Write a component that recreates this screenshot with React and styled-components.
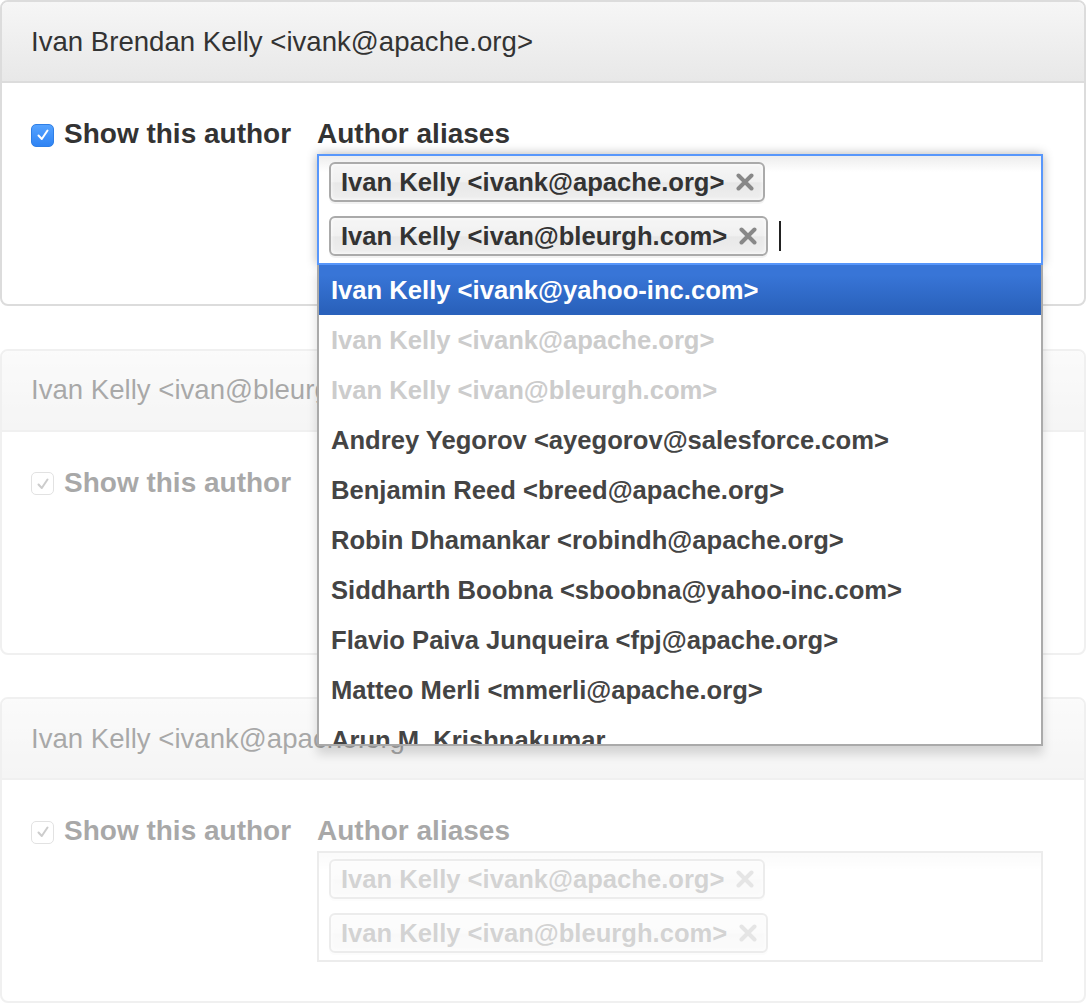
import React from "react";
import styled, { createGlobalStyle } from "styled-components";

const GlobalStyle = createGlobalStyle`
  html, body { margin: 0; padding: 0; background: #fff; }
  body {
    font-family: "Liberation Sans", Arial, Helvetica, sans-serif;
    color: #333;
  }
  * { box-sizing: border-box; }
`;

/* 样式 */
const Page = styled.div`
  width: 1086px;
  display: flex;
  flex-direction: column;
  gap: 42.5px;
`;

const Panel = styled.section`
  position: relative;
  z-index: ${p => (p.$open ? 2 : 1)};
  border: 2px solid #dcdcdc;
  border-radius: 8px;
  background: #fff;
  opacity: ${p => (p.$faded ? 0.42 : 1)};
`;

const Header = styled.header`
  height: 81px;
  display: flex;
  align-items: center;
  padding: 0 29px;
  background: linear-gradient(#f6f6f6, #e8e8e8);
  border-bottom: 2px solid #dcdcdc;
  border-radius: 6px 6px 0 0;
  font-size: 27.6px;
  white-space: nowrap;
  overflow: hidden;
`;

const Body = styled.div`
  display: grid;
  grid-template-columns: 286px 1fr;
  padding: 31px 41px 39px 29px;
`;

const CheckLabel = styled.label`
  display: flex;
  align-items: center;
  gap: 10px;
  height: 40px;
  font-size: 28px;
  font-weight: bold;
`;

const Box = styled.span`
  width: 23px;
  height: 23px;
  flex: none;
  display: flex;
  align-items: center;
  justify-content: center;
  border-radius: 5px;
  margin-top: 2px;
  background: ${p => (p.$disabled ? "#fff" : "linear-gradient(#55a3ff, #2f83f4)")};
  border: ${p => (p.$disabled ? "1px solid #bbb" : "1px solid #2f7fe6")};
`;

const Aliases = styled.div`
  display: flex;
  flex-direction: column;
`;

const FieldLabel = styled.div`
  height: 40px;
  line-height: 40px;
  font-size: 28px;
  font-weight: bold;
`;

const Chosen = styled.div`
  position: relative;
  opacity: ${p => (p.$disabled ? 0.5 : 1)};
`;

const Choices = styled.div`
  display: flex;
  flex-wrap: wrap;
  align-items: center;
  row-gap: 14px;
  column-gap: 11px;
  padding: 6px 8px 7px 10px;
  border: 2px solid ${p => (p.$active ? "#5897fb" : "#aaa")};
  background: linear-gradient(#eee 1%, #fff 15%);
  box-shadow: ${p => (p.$active ? "0 0 10px rgba(0,0,0,.3)" : "none")};
`;

const Chip = styled.span`
  height: 40px;
  display: flex;
  align-items: center;
  gap: 11px;
  padding: 0 8px 0 10px;
  border: 2px solid #aaa;
  border-radius: 6px;
  background: linear-gradient(#f4f4f4 20%, #f0f0f0 50%, #e8e8e8 52%, #eee);
  box-shadow: inset 0 0 4px #fff, 0 2px 0 rgba(0,0,0,.05);
  font-size: 25.6px;
  font-weight: bold;
  color: #333;
  white-space: nowrap;
`;

const Caret = styled.span`
  width: 2px;
  height: 30px;
  background: #222;
`;

const Drop = styled.ul`
  position: absolute;
  top: 100%;
  left: 0;
  right: 0;
  margin: 0;
  padding: 0;
  list-style: none;
  height: 481px;
  overflow: hidden;
  background: #fff;
  border: 2px solid #aaa;
  border-top: 0;
  box-shadow: 0 8px 10px rgba(0,0,0,.15);
`;

const Item = styled.li`
  height: 50px;
  line-height: 50px;
  padding: 0 12px;
  font-size: 25.6px;
  font-weight: bold;
  white-space: nowrap;
  color: ${p => (p.$hl ? "#fff" : p.$off ? "#ccc" : "#444")};
  background: ${p => (p.$hl ? "linear-gradient(#3875d7 20%, #2a62bc 90%)" : "transparent")};
`;

const CloseX = () => (
  <svg width="20" height="18" viewBox="0 0 20 18">
    <path d="M3.5 2.5 L16.5 15.5 M16.5 2.5 L3.5 15.5" stroke="#888" strokeWidth="4" strokeLinecap="round" fill="none" />
  </svg>
);

const Tick = ({ disabled }) => (
  <svg width="16" height="16" viewBox="0 0 16 16">
    <path d="M3.5 8.5 L6.8 12 L12.5 3.5" stroke={disabled ? "#888" : "#fff"} strokeWidth="2" strokeLinecap="round" strokeLinejoin="round" fill="none" />
  </svg>
);

const results = [
  { t: "Ivan Kelly <ivank@yahoo-inc.com>", hl: true },
  { t: "Ivan Kelly <ivank@apache.org>", off: true },
  { t: "Ivan Kelly <ivan@bleurgh.com>", off: true },
  { t: "Andrey Yegorov <ayegorov@salesforce.com>" },
  { t: "Benjamin Reed <breed@apache.org>" },
  { t: "Robin Dhamankar <robindh@apache.org>" },
  { t: "Siddharth Boobna <sboobna@yahoo-inc.com>" },
  { t: "Flavio Paiva Junqueira <fpj@apache.org>" },
  { t: "Matteo Merli <mmerli@apache.org>" },
  { t: "Arun M. Krishnakumar" },
];

const aliases = ["Ivan Kelly <ivank@apache.org>", "Ivan Kelly <ivan@bleurgh.com>"];

const AuthorPanel = ({ title, faded, open }) => (
  <Panel $faded={faded} $open={open}>
    <Header>{title}</Header>
    <Body>
      <CheckLabel>
        <Box $disabled={faded}><Tick disabled={faded} /></Box>
        Show this author
      </CheckLabel>
      <Aliases>
        <FieldLabel>Author aliases</FieldLabel>
        <Chosen $disabled={faded}>
          <Choices $active={open}>
            {aliases.map(a => (
              <Chip key={a}>{a}<CloseX /></Chip>
            ))}
            {open && <Caret />}
          </Choices>
          {open && (
            <Drop>
              {results.map(r => (
                <Item key={r.t} $hl={r.hl} $off={r.off}>{r.t}</Item>
              ))}
            </Drop>
          )}
        </Chosen>
      </Aliases>
    </Body>
  </Panel>
);

export default function App() {
  return (
    <>
      <GlobalStyle />
      <Page>
        <AuthorPanel title="Ivan Brendan Kelly <ivank@apache.org>" open />
        <AuthorPanel title="Ivan Kelly <ivan@bleurgh.com>" faded />
        <AuthorPanel title="Ivan Kelly <ivank@apache.org>" faded />
      </Page>
    </>
  );
}
